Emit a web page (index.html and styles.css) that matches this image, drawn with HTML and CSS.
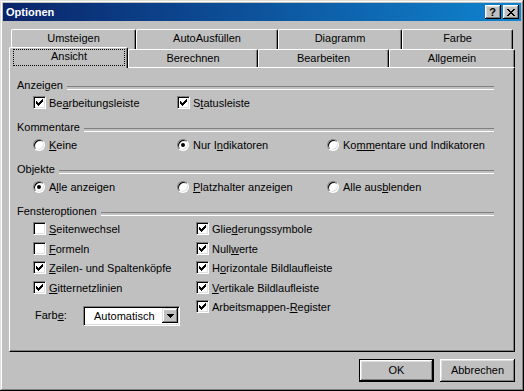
FILE: index.html
```html
<!DOCTYPE html>
<html lang="de">
<head>
    <meta charset="UTF-8">
    <meta name="viewport" content="width=device-width, initial-scale=1.0">
    <title>Optionen</title>
    <link rel="stylesheet" href="styles.css">
</head>
<body>
    <div class="window">
        <div class="titlebar">
            <span class="title">Optionen</span>
            <span class="title-btn title-btn-help">?</span>
            <span class="title-btn">
                <svg width="8" height="7" viewBox="0 0 8 7" shape-rendering="crispEdges"><path d="M0 0h2v1H0z M6 0h2v1H6z M1 1h2v1H1z M5 1h2v1H5z M2 2h4v1H2z M3 3h2v1H3z M2 4h4v1H2z M1 5h2v1H1z M5 5h2v1H5z M0 6h2v1H0z M6 6h2v1H6z"/></svg>
            </span>
        </div>

        <div class="dialog">
            <div class="tabs">
                <div class="tab-row tab-row-back">
                    <div class="tab tab-umsteigen">Umsteigen</div>
                    <div class="tab tab-autofill">AutoAusfüllen</div>
                    <div class="tab tab-diagramm">Diagramm</div>
                    <div class="tab tab-farbe">Farbe</div>
                </div>
                <div class="tab-row tab-row-front">
                    <div class="tab tab-ansicht tab-active"><span class="tab-focus">Ansicht</span></div>
                    <div class="tab tab-berechnen">Berechnen</div>
                    <div class="tab tab-bearbeiten">Bearbeiten</div>
                    <div class="tab tab-allgemein">Allgemein</div>
                </div>
            </div>

            <div class="panel">
                <div class="group">
                    <div class="group-head">Anzeigen</div>
                    <div class="opt-row">
                        <div class="opt"><span class="check is-on"><svg width="7" height="7" viewBox="0 0 7 7" shape-rendering="crispEdges"><path d="M0 2h1v3H0z M1 3h1v3H1z M2 4h1v3H2z M3 3h1v3H3z M4 2h1v3H4z M5 1h1v3H5z M6 0h1v3H6z"/></svg></span><span>Be<u>a</u>rbeitungsleiste</span></div>
                        <div class="opt"><span class="check is-on"><svg width="7" height="7" viewBox="0 0 7 7" shape-rendering="crispEdges"><path d="M0 2h1v3H0z M1 3h1v3H1z M2 4h1v3H2z M3 3h1v3H3z M4 2h1v3H4z M5 1h1v3H5z M6 0h1v3H6z"/></svg></span><span>S<u>t</u>atusleiste</span></div>
                    </div>
                </div>

                <div class="group">
                    <div class="group-head">Kommentare</div>
                    <div class="opt-row">
                        <div class="opt"><span class="radio"></span><span><u>K</u>eine</span></div>
                        <div class="opt"><span class="radio is-on"></span><span>Nur I<u>n</u>dikatoren</span></div>
                        <div class="opt"><span class="radio"></span><span>Ko<u>mm</u>entare und Indikatoren</span></div>
                    </div>
                </div>

                <div class="group">
                    <div class="group-head">Objekte</div>
                    <div class="opt-row">
                        <div class="opt"><span class="radio is-on"></span><span>A<u>l</u>le anzeigen</span></div>
                        <div class="opt"><span class="radio"></span><span><u>P</u>latzhalter anzeigen</span></div>
                        <div class="opt"><span class="radio"></span><span>Alle aus<u>b</u>lenden</span></div>
                    </div>
                </div>

                <div class="group">
                    <div class="group-head">Fensteroptionen</div>
                    <div class="win-opts">
                        <div class="win-col win-col-left">
                            <div class="opt"><span class="check"></span><span><u>S</u>eitenwechsel</span></div>
                            <div class="opt"><span class="check"></span><span><u>F</u>ormeln</span></div>
                            <div class="opt"><span class="check is-on"><svg width="7" height="7" viewBox="0 0 7 7" shape-rendering="crispEdges"><path d="M0 2h1v3H0z M1 3h1v3H1z M2 4h1v3H2z M3 3h1v3H3z M4 2h1v3H4z M5 1h1v3H5z M6 0h1v3H6z"/></svg></span><span><u>Z</u>eilen- und Spaltenköpfe</span></div>
                            <div class="opt"><span class="check is-on"><svg width="7" height="7" viewBox="0 0 7 7" shape-rendering="crispEdges"><path d="M0 2h1v3H0z M1 3h1v3H1z M2 4h1v3H2z M3 3h1v3H3z M4 2h1v3H4z M5 1h1v3H5z M6 0h1v3H6z"/></svg></span><span><u>G</u>itternetzlinien</span></div>
                            <div class="color-row">
                                <span class="color-label">Farb<u>e</u>:</span>
                                <div class="combo">
                                    <span class="combo-value">Automatisch</span>
                                    <span class="combo-btn"><svg width="7" height="4" viewBox="0 0 7 4" shape-rendering="crispEdges"><path d="M0 0h7v1H0z M1 1h5v1H1z M2 2h3v1H2z M3 3h1v1H3z"/></svg></span>
                                </div>
                            </div>
                        </div>
                        <div class="win-col">
                            <div class="opt"><span class="check is-on"><svg width="7" height="7" viewBox="0 0 7 7" shape-rendering="crispEdges"><path d="M0 2h1v3H0z M1 3h1v3H1z M2 4h1v3H2z M3 3h1v3H3z M4 2h1v3H4z M5 1h1v3H5z M6 0h1v3H6z"/></svg></span><span>Glie<u>d</u>erungssymbole</span></div>
                            <div class="opt"><span class="check is-on"><svg width="7" height="7" viewBox="0 0 7 7" shape-rendering="crispEdges"><path d="M0 2h1v3H0z M1 3h1v3H1z M2 4h1v3H2z M3 3h1v3H3z M4 2h1v3H4z M5 1h1v3H5z M6 0h1v3H6z"/></svg></span><span>Null<u>w</u>erte</span></div>
                            <div class="opt"><span class="check is-on"><svg width="7" height="7" viewBox="0 0 7 7" shape-rendering="crispEdges"><path d="M0 2h1v3H0z M1 3h1v3H1z M2 4h1v3H2z M3 3h1v3H3z M4 2h1v3H4z M5 1h1v3H5z M6 0h1v3H6z"/></svg></span><span>H<u>o</u>rizontale Bildlaufleiste</span></div>
                            <div class="opt"><span class="check is-on"><svg width="7" height="7" viewBox="0 0 7 7" shape-rendering="crispEdges"><path d="M0 2h1v3H0z M1 3h1v3H1z M2 4h1v3H2z M3 3h1v3H3z M4 2h1v3H4z M5 1h1v3H5z M6 0h1v3H6z"/></svg></span><span><u>V</u>ertikale Bildlaufleiste</span></div>
                            <div class="opt"><span class="check is-on"><svg width="7" height="7" viewBox="0 0 7 7" shape-rendering="crispEdges"><path d="M0 2h1v3H0z M1 3h1v3H1z M2 4h1v3H2z M3 3h1v3H3z M4 2h1v3H4z M5 1h1v3H5z M6 0h1v3H6z"/></svg></span><span>Arbeitsmappen-<u>R</u>egister</span></div>
                        </div>
                    </div>
                </div>
            </div>

            <div class="actions">
                <span class="btn btn-default">OK</span>
                <span class="btn">Abbrechen</span>
            </div>
        </div>
    </div>
</body>
</html>
```

FILE: styles.css
```css
* {
    box-sizing: border-box;
    margin: 0;
    padding: 0;
}

body {
    font-family: "Liberation Sans", Arial, sans-serif;
    font-size: 11px;
    color: #000;
    background: #c0c0c0;
}

u {
    text-decoration-thickness: 1px;
    text-underline-offset: 1px;
}

/* window frame */
.window {
    width: 524px;
    height: 391px;
    padding: 3px;
    background: #c0c0c0;
    box-shadow: inset -1px -1px #000, inset 1px 1px #dfdfdf,
                inset -2px -2px #808080, inset 2px 2px #fff;
}

.titlebar {
    height: 18px;
    display: flex;
    align-items: center;
    gap: 2px;
    padding: 0 2px 0 3px;
    background: linear-gradient(90deg, #0a246a, #1084d0);
    color: #fff;
}

.title {
    flex: 1;
    font-weight: bold;
    line-height: 18px;
}

.title-btn {
    width: 16px;
    height: 14px;
    display: flex;
    align-items: center;
    justify-content: center;
    background: #c0c0c0;
    color: #000;
    box-shadow: inset -1px -1px #000, inset 1px 1px #fff,
                inset -2px -2px #808080, inset 2px 2px #dfdfdf;
}

.title-btn-help {
    font-weight: bold;
    font-size: 11px;
    line-height: 14px;
    padding-right: 1px;
}

.dialog {
    padding: 8px 6px 0 6px;
}

/* tabs */
.tab-row {
    display: flex;
    align-items: flex-start;
}

.tab-row-back {
    height: 20px;
    padding-left: 2px;
}

.tab-row-front {
    height: 21px;
    margin-top: -2px;
    margin-bottom: -1px;
    position: relative;
    z-index: 1;
}

.tab {
    height: 20px;
    line-height: 17px;
    text-align: center;
    background: #c0c0c0;
    border-top: 1px solid #fff;
    border-left: 1px solid #fff;
    border-right: 1px solid #000;
    border-radius: 2px 2px 0 0;
    box-shadow: inset -1px 0 #808080;
}

.tab-row-front .tab {
    height: 18px;
    margin-top: 2px;
    line-height: 16px;
}

.tab-row-front .tab-active {
    height: 21px;
    margin-top: 0;
    display: flex;
}

.tab-focus {
    flex: 1;
    height: 17px;
    margin: 1px 2px 0 3px;
    line-height: 13px;
    border: 1px dotted #000;
}

.tab-umsteigen { width: 125px; }
.tab-autofill { width: 142px; }
.tab-diagramm { width: 124px; }
.tab-farbe { width: 111px; }
.tab-ansicht { width: 119px; }
.tab-berechnen { width: 130px; }
.tab-bearbeiten { width: 131px; }
.tab-allgemein { width: 126px; }

/* page */
.panel {
    height: 285px;
    padding: 10px 20px 0 7px;
    border: 1px solid;
    border-color: #fff #000 #000 #fff;
    box-shadow: inset -1px -1px #808080;
}

.group + .group {
    margin-top: 9px;
}

.group-head {
    height: 14px;
    line-height: 14px;
    display: flex;
}

.group-head::after {
    content: "";
    flex: 1;
    height: 2px;
    margin: 8px 0 0 4px;
    border-top: 1px solid #808080;
    border-bottom: 1px solid #fff;
}

.opt-row {
    display: grid;
    grid-template-columns: 144px 150px auto;
    margin-top: 4px;
    padding-left: 16px;
}

.opt {
    height: 15px;
    display: flex;
    align-items: flex-start;
    line-height: 15px;
    white-space: nowrap;
}

.check {
    width: 13px;
    height: 13px;
    margin-right: 3px;
    display: flex;
    align-items: center;
    justify-content: center;
    background: #fff;
    border: 1px solid;
    border-color: #808080 #fff #fff #808080;
    box-shadow: inset 1px 1px #000, inset -1px -1px #dfdfdf;
}

.radio {
    width: 12px;
    height: 12px;
    margin: 1px 4px 0 0;
    border-radius: 50%;
    background: #fff;
    border: 1px solid;
    border-color: #808080 #fff #fff #808080;
    box-shadow: inset 1px 1px #000, inset -1px -1px #dfdfdf;
}

.radio.is-on::after {
    content: "";
    display: block;
    width: 4px;
    height: 4px;
    margin: 3px;
    border-radius: 50%;
    background: #000;
}

.win-opts {
    display: flex;
    margin-top: 4px;
    padding-left: 16px;
}

.win-col .opt {
    height: 19.5px;
}

.win-col-left {
    width: 163px;
}

.color-row {
    display: flex;
    align-items: flex-start;
    margin-top: 6px;
}

.color-label {
    width: 50px;
    padding: 2px 0 0 2px;
    line-height: 15px;
}

.combo {
    width: 97px;
    height: 20px;
    display: flex;
    padding: 2px;
    background: #fff;
    border: 1px solid;
    border-color: #808080 #fff #fff #808080;
    box-shadow: inset 1px 1px #000, inset -1px -1px #dfdfdf;
}

.combo-value {
    flex: 1;
    padding-left: 8px;
    line-height: 15px;
}

.combo-btn {
    width: 16px;
    height: 15px;
    margin: -1px -1px 0 0;
    display: flex;
    align-items: center;
    justify-content: center;
    background: #c0c0c0;
    box-shadow: inset -1px -1px #000, inset 1px 1px #dfdfdf,
                inset -2px -2px #808080, inset 2px 2px #fff;
}

/* buttons */
.actions {
    display: flex;
    justify-content: flex-end;
    gap: 6px;
    margin-top: 7px;
}

.btn {
    width: 75px;
    height: 23px;
    line-height: 23px;
    text-align: center;
    background: #c0c0c0;
    box-shadow: inset -1px -1px #000, inset 1px 1px #fff,
                inset -2px -2px #808080, inset 2px 2px #dfdfdf;
}

.btn-default {
    line-height: 21px;
    border: 1px solid #000;
}
```
